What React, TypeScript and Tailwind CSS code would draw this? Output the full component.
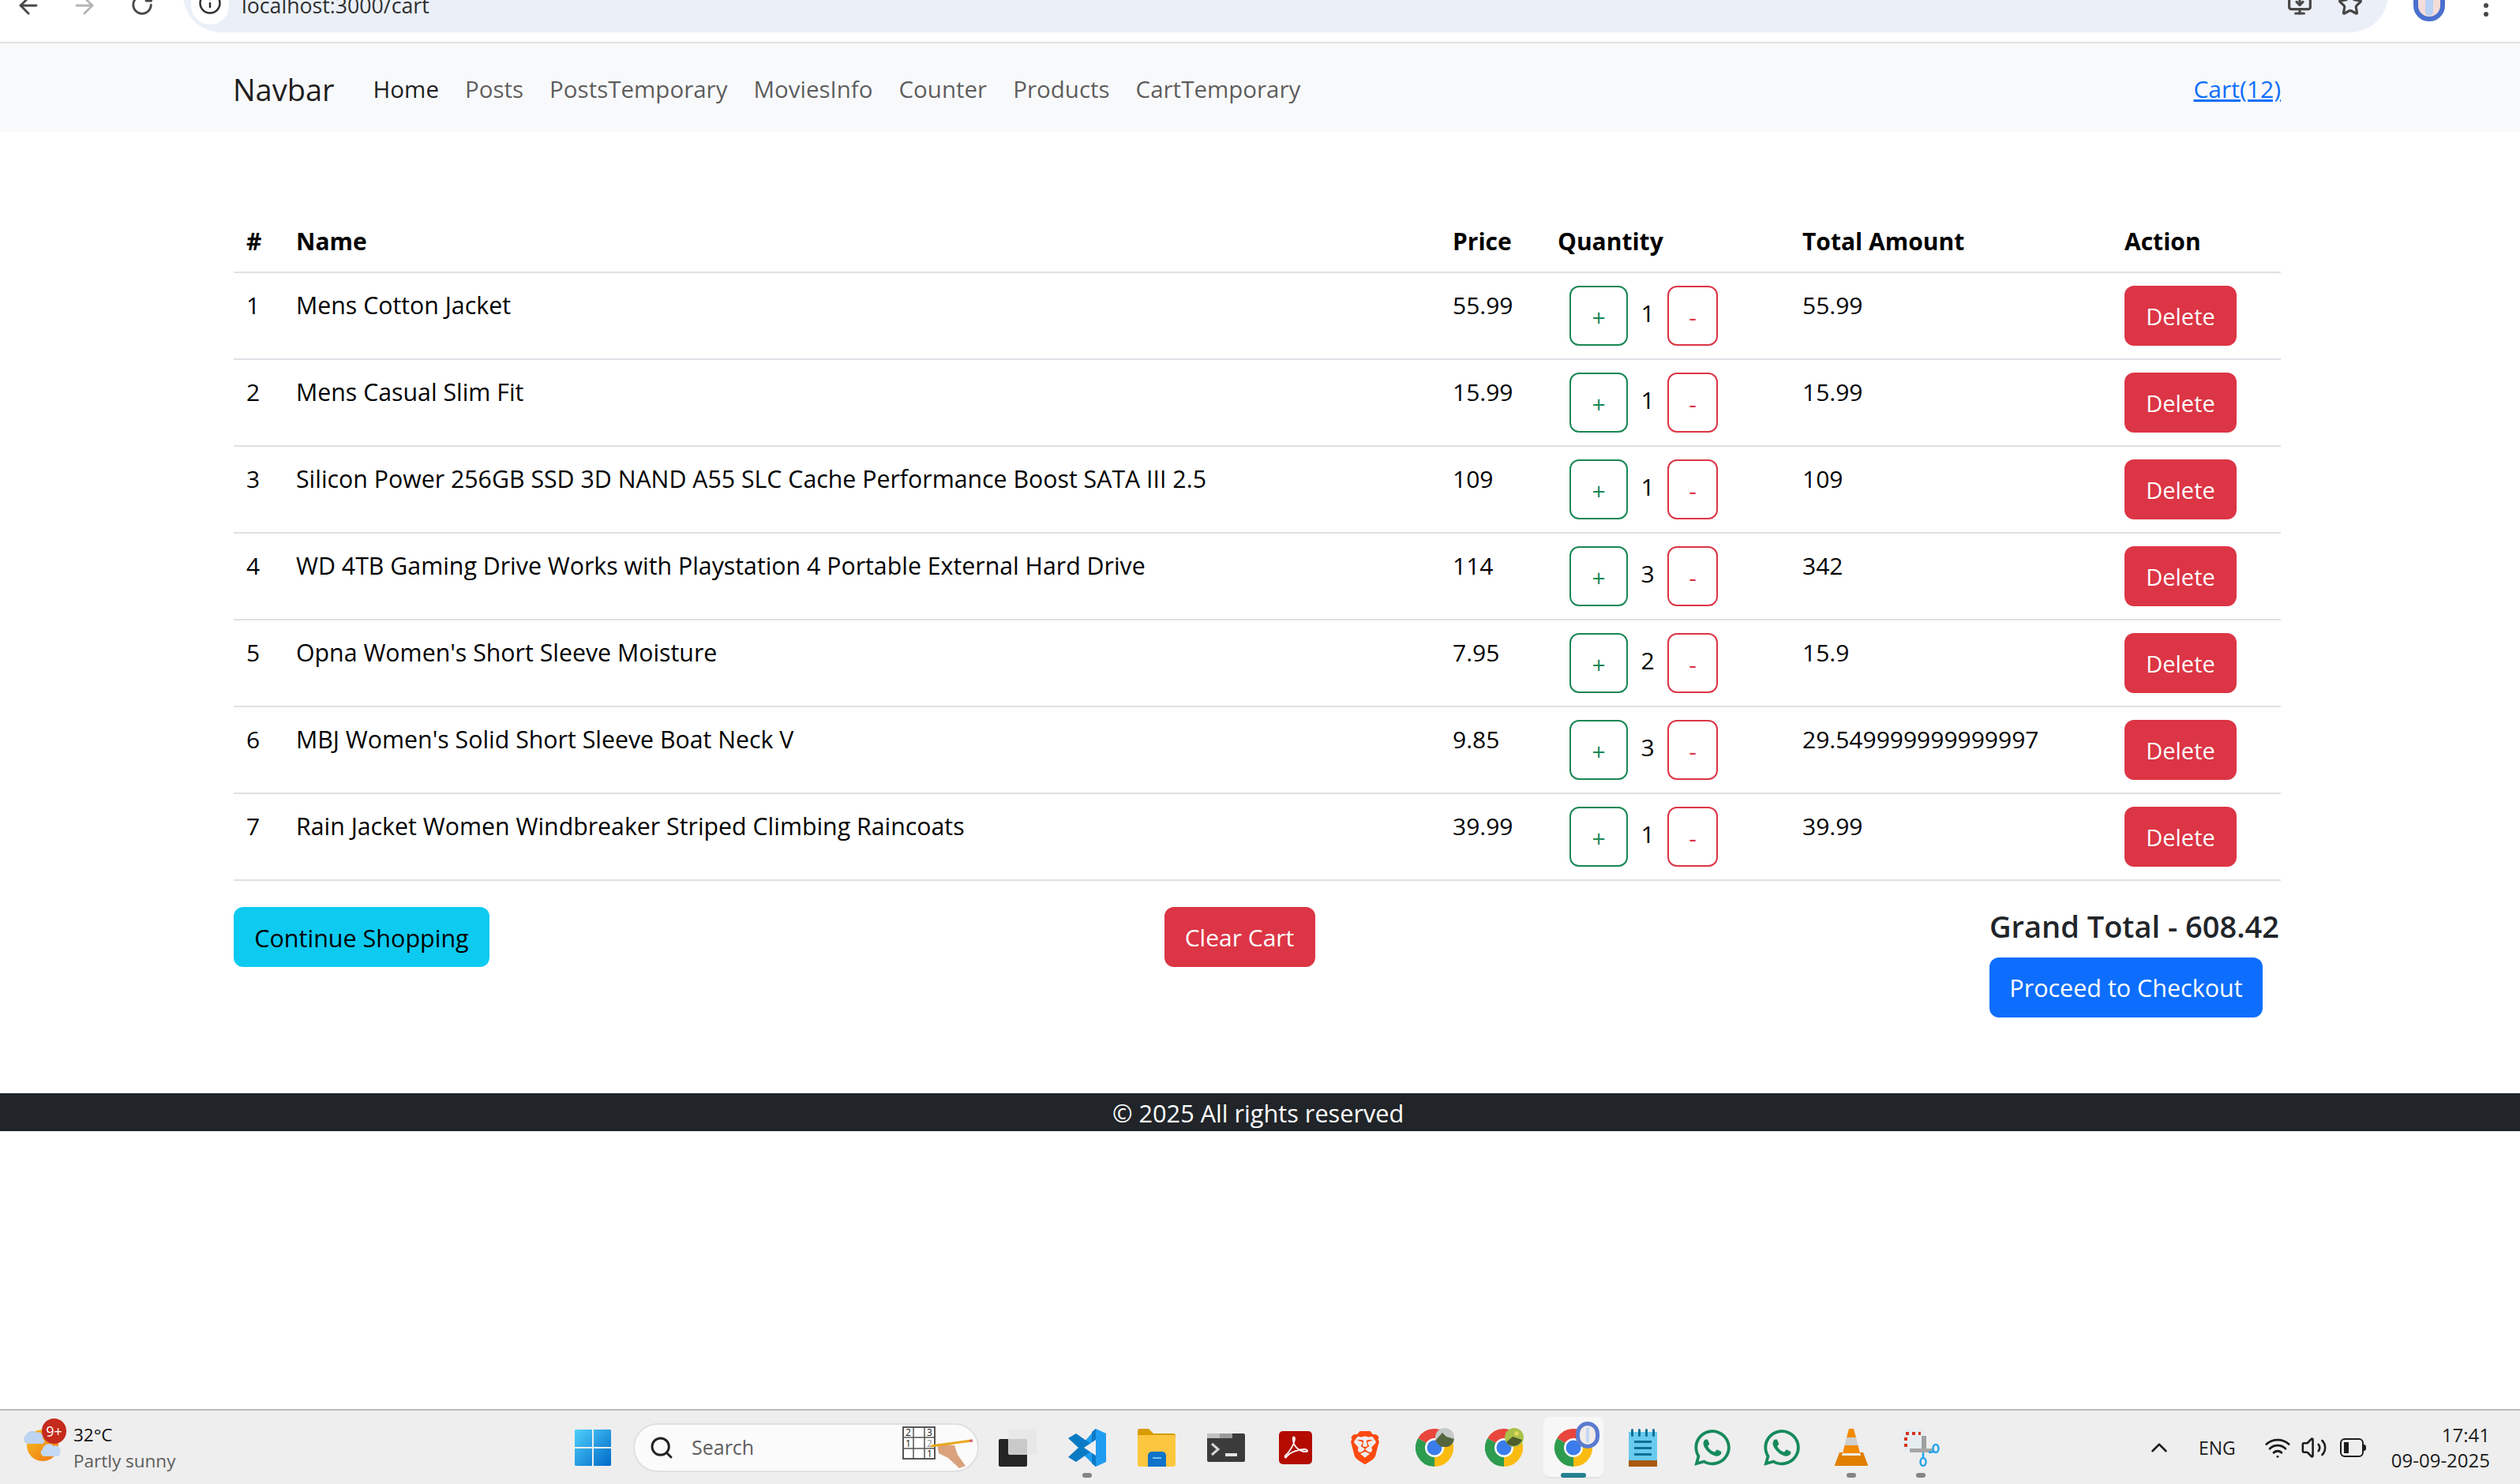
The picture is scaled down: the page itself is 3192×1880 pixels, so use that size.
import { ArrowLeft, ArrowRight, ChevronUp, Info, MonitorDown, RotateCw, Search, Star, Volume2, Wifi } from 'lucide-react';
import { FaWhatsapp } from 'react-icons/fa';
import { SiBrave } from 'react-icons/si';

const cartItems = [
  { id: 1, name: 'Mens Cotton Jacket', price: '55.99', qty: 1, total: '55.99' },
  { id: 2, name: 'Mens Casual Slim Fit', price: '15.99', qty: 1, total: '15.99' },
  { id: 3, name: 'Silicon Power 256GB SSD 3D NAND A55 SLC Cache Performance Boost SATA III 2.5', price: '109', qty: 1, total: '109' },
  { id: 4, name: 'WD 4TB Gaming Drive Works with Playstation 4 Portable External Hard Drive', price: '114', qty: 3, total: '342' },
  { id: 5, name: "Opna Women's Short Sleeve Moisture", price: '7.95', qty: 2, total: '15.9' },
  { id: 6, name: "MBJ Women's Solid Short Sleeve Boat Neck V", price: '9.85', qty: 3, total: '29.549999999999997' },
  { id: 7, name: 'Rain Jacket Women Windbreaker Striped Climbing Raincoats', price: '39.99', qty: 1, total: '39.99' },
];

const navLinks = ['Posts', 'PostsTemporary', 'MoviesInfo', 'Counter', 'Products', 'CartTemporary'];

function BrowserBar() {
  return (
    <div className="flex h-[53px] items-end overflow-hidden bg-white">
      <ArrowLeft className="mb-[29px] ml-[19px] h-[34px] w-[34px] shrink-0 text-[#474747]" strokeWidth={2} />
      <ArrowRight className="mb-[29px] ml-[37px] h-[34px] w-[34px] shrink-0 text-[#b4b4b4]" strokeWidth={2} />
      <RotateCw className="mb-[32px] ml-[41px] h-[30px] w-[30px] shrink-0 text-[#474747]" strokeWidth={2.2} />
      <div className="mb-[12px] ml-[37px] flex h-[96px] w-[2793px] shrink-0 items-end rounded-[48px] bg-[#ebf0f8]">
        <div className="mb-[10px] ml-[10px] flex h-[72px] w-[48px] items-end justify-center rounded-full bg-white pb-[12px]">
          <Info className="h-[30px] w-[30px] text-[#303030]" strokeWidth={2} />
        </div>
        <span className="mb-[18px] ml-[16px] text-[26.7px] leading-[32px] text-[#303030]">localhost:3000/cart</span>
        <MonitorDown className="mb-[20px] ml-auto h-[32px] w-[32px] text-[#474747]" strokeWidth={2.4} />
        <Star className="mb-[20px] ml-[32px] mr-[32px] h-[32px] w-[32px] text-[#474747]" strokeWidth={2.4} />
      </div>
      <div className="mb-[26px] ml-[32px] flex h-[54px] w-[40px] shrink-0 items-center justify-center rounded-full border-[6px] border-[#4a70cf] bg-[#f4dcd8]">
        <div className="h-[40px] w-[10px] rounded-full bg-[#b9d2f5]" />
      </div>
      <div className="mb-[32px] ml-[49px] flex shrink-0 flex-col gap-[5px]">
        <div className="h-[6px] w-[6px] rounded-full bg-[#474747]" />
        <div className="h-[6px] w-[6px] rounded-full bg-[#474747]" />
      </div>
    </div>
  );
}

function Navbar() {
  return (
    <nav className="flex h-[114px] items-center border-t-2 border-[#e0e2dd] bg-[#f8f9fa] pl-[295px] pr-[303px] pt-[3px]">
      <span className="mr-[49px] text-[38px] leading-[48px] text-black/90">Navbar</span>
      <div className="flex gap-[33px] text-[29.5px] leading-[48px]">
        <span className="text-black/90">Home</span>
        {navLinks.map((link) => (
          <span key={link} className="text-black/65">{link}</span>
        ))}
      </div>
      <a href="#" className="ml-auto text-[30px] leading-[48px] text-[#0d6efd] underline">Cart(12)</a>
    </nav>
  );
}

function CartTable() {
  return (
    <table className="w-[2593px] table-fixed border-collapse text-[30px] leading-[48px] text-black">
      <colgroup>
        <col className="w-[63px]" />
        <col className="w-[1465px]" />
        <col className="w-[133px]" />
        <col className="w-[310px]" />
        <col className="w-[408px]" />
        <col className="w-[214px]" />
      </colgroup>
      <thead>
        <tr className="border-b-2 border-[#dee2e6] text-left">
          <th className="px-4 pb-[14px] pt-[18px] font-bold">#</th>
          <th className="px-4 pb-[14px] pt-[18px] font-bold">Name</th>
          <th className="px-4 pb-[14px] pt-[18px] font-bold">Price</th>
          <th className="px-4 pb-[14px] pt-[18px] font-bold">Quantity</th>
          <th className="px-4 pb-[14px] pt-[18px] font-bold">Total Amount</th>
          <th className="px-4 pb-[14px] pt-[18px] font-bold">Action</th>
        </tr>
      </thead>
      <tbody>
        {cartItems.map((item) => (
          <tr key={item.id} className="border-b-2 border-[#dee2e6] align-top">
            <td className="px-4 pt-[17px]">{item.id}</td>
            <td className="whitespace-nowrap px-4 pt-[17px] text-[30.3px]">{item.name}</td>
            <td className="px-4 pt-[17px]">{item.price}</td>
            <td className="p-4">
              <div className="ml-[15px] flex items-center">
                <button className="h-[76px] w-[74px] rounded-xl border-2 border-[#198754] pt-1 text-[30px] leading-none text-[#198754]">+</button>
                <span className="w-[50px] pb-[6px] text-center">{item.qty}</span>
                <button className="h-[76px] w-[64px] rounded-xl border-2 border-[#dc3545] pt-1 text-[30px] leading-none text-[#dc3545]">-</button>
              </div>
            </td>
            <td className="px-4 pt-[17px]">{item.total}</td>
            <td className="p-4">
              <button className="h-[76px] w-[142px] rounded-xl bg-[#dc3545] pt-[2px] text-[29px] text-white">Delete</button>
            </td>
          </tr>
        ))}
      </tbody>
    </table>
  );
}

function ChromeIcon({ badge }: { badge: 'mountain' | 'leaf' | 'profile' }) {
  return (
    <div className="relative h-12 w-12">
      <svg viewBox="0 0 48 48" className="h-12 w-12">
        <path d="M24 24L3.2 12A24 24 0 0 1 44.8 12Z" fill="#e8453c" />
        <path d="M24 24L44.8 12A24 24 0 0 1 24 48Z" fill="#fbbc12" />
        <path d="M24 24L24 48A24 24 0 0 1 3.2 12Z" fill="#2d9c4e" />
        <circle cx="24" cy="24" r="12" fill="#fff" />
        <circle cx="24" cy="24" r="9.5" fill="#3a7cec" />
      </svg>
      {badge === 'mountain' && (
        <svg viewBox="0 0 24 24" className="absolute -right-px -top-px h-6 w-6">
          <circle cx="12" cy="12" r="12" fill="#c5cac8" />
          <path d="M0 16L9 6L14 11L24 14A12 12 0 0 1 1 17Z" fill="#55663f" />
        </svg>
      )}
      {badge === 'leaf' && (
        <svg viewBox="0 0 24 24" className="absolute -right-px -top-px h-6 w-6">
          <circle cx="12" cy="12" r="12" fill="#a9c24a" />
          <path d="M2 18L10 11L22 15A12 12 0 0 1 3 20Z" fill="#4d5d2c" />
          <circle cx="15" cy="7" r="3" fill="#e1d85a" />
        </svg>
      )}
      {badge === 'profile' && (
        <div className="absolute -right-[9px] -top-[9px] flex h-[34px] w-[30px] items-center justify-center rounded-full border-[5px] border-[#5a7bd0] bg-[#f1ece9]">
          <div className="h-5 w-1 rounded-full bg-[#c3d8f5]" />
        </div>
      )}
    </div>
  );
}

function WindowsIcon() {
  return (
    <svg viewBox="0 0 46 46" className="h-[46px] w-[46px]">
      <defs>
        <linearGradient id="win" x1="0" y1="0" x2="1" y2="1">
          <stop offset="0" stopColor="#4fd0fb" />
          <stop offset="1" stopColor="#0069c8" />
        </linearGradient>
      </defs>
      <path d="M1 0H22V22H0V1ZM24 0H45L46 1V22H24ZM0 24H22V46H1L0 45ZM24 24H46V45L45 46H24Z" fill="url(#win)" />
    </svg>
  );
}

function TaskViewIcon() {
  return (
    <svg viewBox="0 0 48 48" className="h-12 w-12">
      <rect x="0" y="13" width="36" height="35" rx="2" fill="#252525" />
      <rect x="12" y="0" width="36" height="33" rx="2" fill="#e6e6e6" fillOpacity="0.85" />
    </svg>
  );
}

function VsCodeIcon() {
  return (
    <svg viewBox="0 0 48 48" className="h-12 w-12">
      <path d="M35 0L48 6V42L35 48L12 26Z" fill="#1f9cf0" />
      <path d="M35 0L35 48L30 44V28L10 42L0 36L13 24L0 12L10 6L30 20V4Z" fill="#0b7ac5" />
      <path d="M35 14L20 24L35 34Z" fill="#eeeeee" />
    </svg>
  );
}

function FolderIcon() {
  return (
    <svg viewBox="0 0 48 48" className="h-12 w-12">
      <path d="M0 3A3 3 0 0 1 3 0H14L20 6H45A3 3 0 0 1 48 9V14H0Z" fill="#d79b00" />
      <path d="M0 8H45A3 3 0 0 1 48 11V45A3 3 0 0 1 45 48H3A3 3 0 0 1 0 45Z" fill="#fcc63f" />
      <path d="M13 48V34A5 5 0 0 1 18 29H31A5 5 0 0 1 36 34V48Z" fill="#0f73c9" />
      <rect x="19" y="36" width="11" height="2" fill="#7cc0f0" />
    </svg>
  );
}

function TerminalIcon() {
  return (
    <svg viewBox="0 0 48 36" className="h-9 w-12">
      <rect width="48" height="36" y="0" rx="2" fill="#3b3b3b" />
      <rect width="17" height="6" x="0" y="0" fill="#c0c0c0" />
      <rect width="16" height="6" x="16" y="0" fill="#9a9a9a" />
      <path d="M6 13L14 20L6 27" fill="none" stroke="#d4d4d4" strokeWidth="3" />
      <rect x="23" y="25" width="15" height="4" fill="#e4e4e4" />
    </svg>
  );
}

function AcrobatIcon() {
  return (
    <svg viewBox="0 0 42 42" className="h-[42px] w-[42px]">
      <rect width="42" height="42" rx="5" fill="#b30b00" />
      <path d="M8 31C12 28 19 18 20 10C20 6 17 7 18 12C19 20 26 26 34 26C38 26 36 23 32 23C24 23 14 27 10 32C8 35 7 33 8 31Z" fill="none" stroke="#fff" strokeWidth="1.8" />
    </svg>
  );
}

function NotepadIcon() {
  return (
    <svg viewBox="0 0 36 48" className="h-12 w-9">
      <rect x="0" y="4" width="36" height="38" fill="#68cbee" />
      <rect x="0" y="40" width="36" height="8" fill="#a85a10" />
      <rect x="3" y="0" width="3" height="10" rx="1.5" fill="#0c6f96" />
      <rect x="12" y="0" width="3" height="10" rx="1.5" fill="#0c6f96" />
      <rect x="21" y="0" width="3" height="10" rx="1.5" fill="#0c6f96" />
      <rect x="30" y="0" width="3" height="10" rx="1.5" fill="#0c6f96" />
      <rect x="7" y="15" width="22" height="3" fill="#0c6f96" />
      <rect x="7" y="23" width="22" height="3" fill="#0c6f96" />
      <rect x="7" y="31" width="22" height="3" fill="#0c6f96" />
    </svg>
  );
}

function VlcIcon() {
  return (
    <svg viewBox="0 0 42 48" className="h-12 w-[42px]">
      <path d="M18 0H24L27 11H15Z" fill="#f18a00" />
      <path d="M15 11H27L29.5 21H12.5Z" fill="#cfcfcf" />
      <path d="M12.5 21H29.5L32 31H10Z" fill="#f18a00" />
      <path d="M6 30H10L9 34H33L32 30H36L42 46V47H0V46Z" fill="#e08000" />
    </svg>
  );
}

function SnipIcon() {
  return (
    <svg viewBox="0 0 48 48" className="h-12 w-12">
      <rect x="0" y="0" width="28" height="28" fill="#e6edf1" />
      <path d="M5 6H9M13 6H17M21 6H24M5 11V15M5 19V23" stroke="#d6341e" strokeWidth="4" fill="none" />
      <rect x="25" y="9" width="6" height="20" fill="#a0a0a0" />
      <rect x="10" y="25" width="30" height="5" fill="#a7a7a7" />
      <ellipse cx="43" cy="25" rx="3.5" ry="5" fill="none" stroke="#26a4ea" strokeWidth="2.5" />
      <ellipse cx="27" cy="42" rx="3.5" ry="5" fill="none" stroke="#26a4ea" strokeWidth="2.5" />
      <path d="M27 30V37M34 30L41 29" stroke="#26a4ea" strokeWidth="2.5" />
    </svg>
  );
}

function SudokuArt() {
  return (
    <svg viewBox="0 0 90 54" className="h-[54px] w-[90px]">
      <rect x="1" y="1" width="40" height="40" fill="#fff" stroke="#555" strokeWidth="2" />
      <path d="M14 1V41M28 1V41M1 14H41M1 28H41" stroke="#555" strokeWidth="1.5" />
      <text x="4" y="12" fontSize="12" fill="#111">2</text>
      <text x="31" y="12" fontSize="12" fill="#111">3</text>
      <text x="4" y="26" fontSize="12" fill="#111">1</text>
      <text x="31" y="26" fontSize="12" fill="#888">2</text>
      <text x="31" y="39" fontSize="12" fill="#111">1</text>
      <path d="M44 22L66 24L70 36L80 50L72 53L58 40L46 34Z" fill="#d9a27c" />
      <path d="M36 25L88 18" stroke="#e7a81e" strokeWidth="3" />
      <path d="M85 18.5L89 18" stroke="#d9606a" strokeWidth="3" />
    </svg>
  );
}

function WeatherIcon() {
  return (
    <div className="relative h-[44px] w-[48px] shrink-0">
      <svg viewBox="0 0 48 44" className="h-[44px] w-[48px]">
        <defs>
          <linearGradient id="sun" x1="0" y1="0" x2="1" y2="1">
            <stop offset="0" stopColor="#f6c020" />
            <stop offset="1" stopColor="#ef7410" />
          </linearGradient>
        </defs>
        <circle cx="24" cy="24" r="20" fill="url(#sun)" />
        <path d="M5 22A6 6 0 0 1 3 11A8 8 0 0 1 16 8A6 6 0 0 1 24 16A3 3 0 0 1 22 22Z" fill="#bcd3f2" />
        <path d="M25 38A5 5 0 0 1 24 29A8 8 0 0 1 38 25A6 6 0 0 1 46 33A5 5 0 0 1 44 38Z" fill="#c3d8f5" />
      </svg>
      <span className="absolute -top-[10px] left-[23px] flex h-[32px] w-[31px] items-center justify-center rounded-full bg-[#c42b1c] text-[18px] leading-none text-white">9+</span>
    </div>
  );
}

function TaskbarSlot({ children, dot, active }: { children: React.ReactNode; dot?: boolean; active?: boolean }) {
  return (
    <div className="relative flex h-[78px] w-[88px] items-center justify-center">
      {active && <div className="absolute left-[6px] top-0 h-[78px] w-[76px] rounded-lg border-b-2 border-[#e4e4e4] bg-[#f7f7f7]" />}
      <div className="relative">{children}</div>
      {dot && <div className="absolute bottom-[1px] left-[38px] h-[6px] w-[12px] rounded-full bg-[#858585]" />}
      {active && <div className="absolute bottom-[1px] left-[28px] h-[6px] w-[32px] rounded-full bg-[#24818f]" />}
    </div>
  );
}

function Taskbar() {
  return (
    <footer className="relative flex h-[95px] items-center border-t-2 border-[#bebebe] bg-[#eeeeee] pt-[1px] text-[24px]">
      <div className="absolute left-[30px] top-[20px] flex">
        <WeatherIcon />
        <div className="ml-[15px] -mt-[6px] flex flex-col text-[22.5px] leading-[33px]">
          <span className="text-[#111]">32°C</span>
          <span className="text-[#5d5d5d]">Partly sunny</span>
        </div>
      </div>

      <div className="ml-[728px] flex items-center">
        <WindowsIcon />
        <div className="ml-[28px] flex h-[62px] w-[438px] items-center rounded-full border-2 border-[#e0e0e0] bg-[#fbfbfb] pl-[18px]">
          <Search className="h-[32px] w-[32px] text-[#222]" strokeWidth={2.2} />
          <span className="ml-[22px] text-[25px] text-[#5f5f5f]">Search</span>
          <div className="ml-[188px]"><SudokuArt /></div>
        </div>
        <div className="ml-[5px] flex items-center">
          <TaskbarSlot><TaskViewIcon /></TaskbarSlot>
          <TaskbarSlot dot><VsCodeIcon /></TaskbarSlot>
          <TaskbarSlot><FolderIcon /></TaskbarSlot>
          <TaskbarSlot><TerminalIcon /></TaskbarSlot>
          <TaskbarSlot><AcrobatIcon /></TaskbarSlot>
          <TaskbarSlot><SiBrave className="h-12 w-[42px] text-[#fb4a10]" /></TaskbarSlot>
          <TaskbarSlot><ChromeIcon badge="mountain" /></TaskbarSlot>
          <TaskbarSlot><ChromeIcon badge="leaf" /></TaskbarSlot>
          <TaskbarSlot active><ChromeIcon badge="profile" /></TaskbarSlot>
          <TaskbarSlot><NotepadIcon /></TaskbarSlot>
          <TaskbarSlot><FaWhatsapp className="h-[52px] w-[52px] text-[#168a5c]" /></TaskbarSlot>
          <TaskbarSlot><FaWhatsapp className="h-[52px] w-[52px] text-[#168a5c]" /></TaskbarSlot>
          <TaskbarSlot dot><VlcIcon /></TaskbarSlot>
          <TaskbarSlot dot><SnipIcon /></TaskbarSlot>
        </div>
      </div>

      <div className="ml-auto mr-[38px] flex items-center text-[#1c1c1c]">
        <ChevronUp className="h-[34px] w-[34px]" strokeWidth={1.8} />
        <span className="ml-[33px] text-[23px]">ENG</span>
        <Wifi className="ml-[36px] h-[34px] w-[34px]" strokeWidth={2} />
        <Volume2 className="ml-[12px] h-[34px] w-[34px]" strokeWidth={1.8} />
        <div className="ml-[16px] flex items-center">
          <div className="flex h-[24px] w-[30px] items-center rounded-md border-2 border-[#1c1c1c] p-[3px]">
            <div className="h-full w-[6px] bg-[#1c1c1c]" />
          </div>
          <div className="h-[8px] w-[3px] rounded-r bg-[#1c1c1c]" />
        </div>
        <div className="ml-[32px] flex flex-col items-end text-[24px] leading-[32px]">
          <span>17:41</span>
          <span>09-09-2025</span>
        </div>
      </div>
    </footer>
  );
}

export default function App() {
  return (
    <div className="flex h-[1880px] flex-col bg-white font-['Open_Sans',sans-serif]">
      <BrowserBar />
      <Navbar />

      <main className="flex-1">
        <div className="ml-[296px] mt-[97px] w-[2593px]">
          <CartTable />

          <div className="mt-[33px] flex items-start justify-between text-[30.5px] leading-[48px]">
            <button className="h-[76px] w-[324px] rounded-xl bg-[#0dcaf0] pt-[2px] text-black">Continue Shopping</button>
            <button className="h-[76px] w-[191px] rounded-xl bg-[#dc3545] pt-[2px] text-[30px] text-white">Clear Cart</button>
            <div className="w-[369px]">
              <h5 className="mb-4 text-[38px] font-semibold text-[#212529]">Grand Total - 608.42</h5>
              <button className="h-[76px] w-[346px] rounded-xl bg-[#0d6efd] text-white">Proceed to Checkout</button>
            </div>
          </div>
        </div>

        <div className="mt-[96px] h-[48px] bg-[#212529] pl-[1409px] pt-[2px] text-[30.7px] leading-[46px] text-white">© 2025 All rights reserved</div>
      </main>

      <Taskbar />
    </div>
  );
}
